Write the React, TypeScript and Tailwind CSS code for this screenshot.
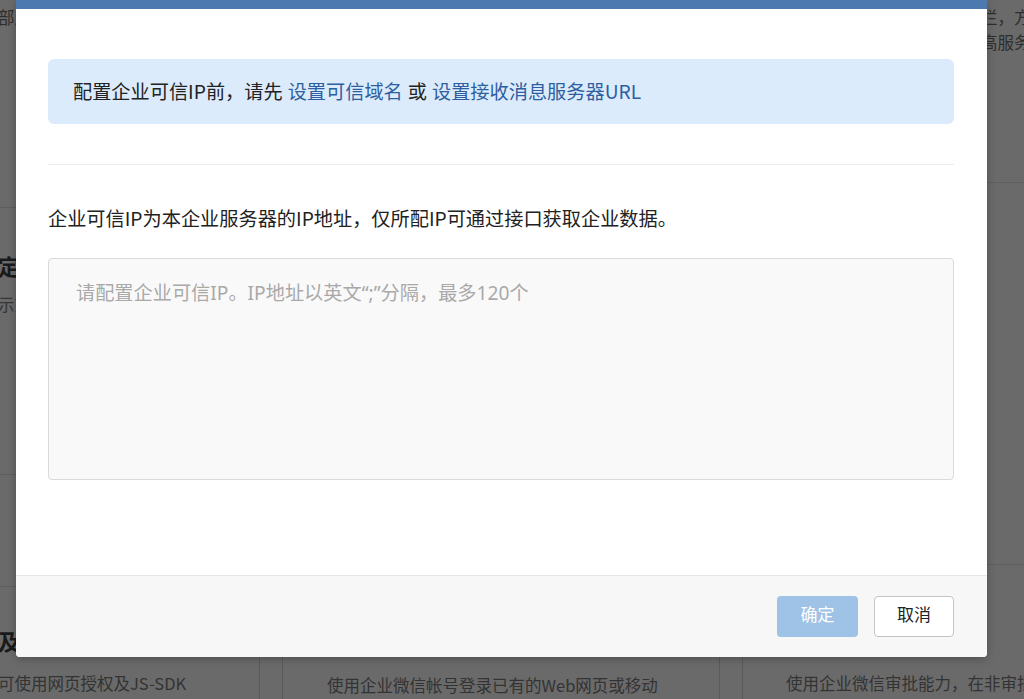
import React from 'react';

export default function App() {
  return (
    <div className="relative w-[1024px] h-[699px] overflow-hidden bg-[#6a6a6a] font-['Noto_Sans_CJK_SC',sans-serif]">
      {/* Page behind the overlay */}
      <div className="grid grid-cols-[438px_438px_438px] gap-x-[22px] ml-[-178px] h-[699px] text-[16.5px] leading-[25px]">
        {/* Left column */}
        <div className="flex flex-col">
          <div className="h-[208px] border-b border-[#5e5e5e] pl-[44px] pt-[5px] text-[#2e2e2e] whitespace-nowrap">
            在通讯录中管理全部成员信息
          </div>
          <div className="h-[267px] border-b border-[#5e5e5e] pl-[44px] pt-[42px] whitespace-nowrap">
            <div className="text-[22px] leading-[30px] font-bold text-[#1a1a1a]">工作台菜单设定</div>
            <div className="mt-[12px] text-[#363636]">应用在工作台的展示方式</div>
          </div>
          <div className="h-[112px] border-b border-[#5e5e5e]" />
          <div className="flex-1 border-r border-[#5a5a5a] pl-[44px] pt-[38px] whitespace-nowrap">
            <div className="text-[22px] leading-[30px] font-bold text-[#1a1a1a]">应用网页授权及JS-SDK</div>
            <div className="mt-[16px] text-[#333]">应用开发完成后，可使用网页授权及JS-SDK</div>
          </div>
        </div>

        {/* Middle column */}
        <div className="flex flex-col">
          <div className="h-[587px]" />
          <div className="flex-1 border-x border-t border-[#5a5a5a] pl-[40px] pt-[28px] whitespace-nowrap">
            <div className="ml-[6px] w-9 h-9 rounded-full bg-[#2f2f2f]" />
            <div className="mt-[20.5px] pl-[4px] text-[#333]">使用企业微信帐号登录已有的Web网页或移动</div>
          </div>
        </div>

        {/* Right column */}
        <div className="flex flex-col">
          <div className="h-[183px] border-b border-[#5e5e5e] pl-[41px] pt-[5px] text-[#2e2e2e] whitespace-nowrap">
            <div>可将应用配置到工作台菜单栏，方便成员快速访问</div>
            <div>丰富自定义应用的能力，提高服务效率</div>
          </div>
          <div className="h-[382px] border-b border-[#5e5e5e]" />
          <div className="flex-1 border-l border-[#5a5a5a] pl-[43px] pt-[106px] text-[#333] whitespace-nowrap">
            使用企业微信审批能力，在非审批应用中发起审批
          </div>
        </div>
      </div>

      {/* Dialog */}
      <div className="absolute left-[16px] top-0 w-[971px] h-[657px] bg-white rounded-b-[4px] shadow-[0_2px_8px_rgba(0,0,0,0.25)] flex flex-col overflow-hidden">
        <div className="h-[9px] bg-[#4c79b0]" />

        <div className="flex-1 pl-[32px] pr-[33px] pt-[50px]">
          <div className="h-[65px] rounded-[6px] bg-[#dcebfc] flex items-center pl-[25px] text-[19.2px] text-[#222] whitespace-nowrap">
            配置企业可信IP前，请先
            <a className="ml-[5px] text-[#2d5fa0] cursor-pointer">设置可信域名</a>
            <span className="mx-[5px]">或</span>
            <a className="text-[#2d5fa0] cursor-pointer">设置接收消息服务器URL</a>
          </div>

          <div className="mt-[40px] h-px bg-[#ececec]" />

          <p className="mt-[39px] text-[19.2px] leading-[28px] text-[#222]">
            企业可信IP为本企业服务器的IP地址，仅所配IP可通过接口获取企业数据。
          </p>

          <textarea
            className="mt-[26px] block w-full h-[222px] resize-none border border-[#dadada] rounded-[4px] bg-[#f9f9f9] pl-[27px] pt-[20px] font-['Noto_Sans','Noto_Sans_CJK_SC',sans-serif] text-[19.2px] leading-[28px] text-[#222] placeholder:text-[#a9a9a9] outline-none"
            placeholder="请配置企业可信IP。IP地址以英文“;”分隔，最多120个"
          />
        </div>

        <div className="h-[82px] border-t border-[#e6e6e6] bg-[#f7f7f7] flex items-center justify-end gap-[16px] pr-[33px]">
          <button className="w-[81px] h-[41px] rounded-[4px] bg-[#9ec3e6] text-white text-[17px] pb-[6px]">
            确定
          </button>
          <button className="w-[80px] h-[41px] rounded-[4px] bg-white border-[1.5px] border-[#c4c4c4] text-[#222] text-[17px] pb-[6px]">
            取消
          </button>
        </div>
      </div>
    </div>
  );
}
